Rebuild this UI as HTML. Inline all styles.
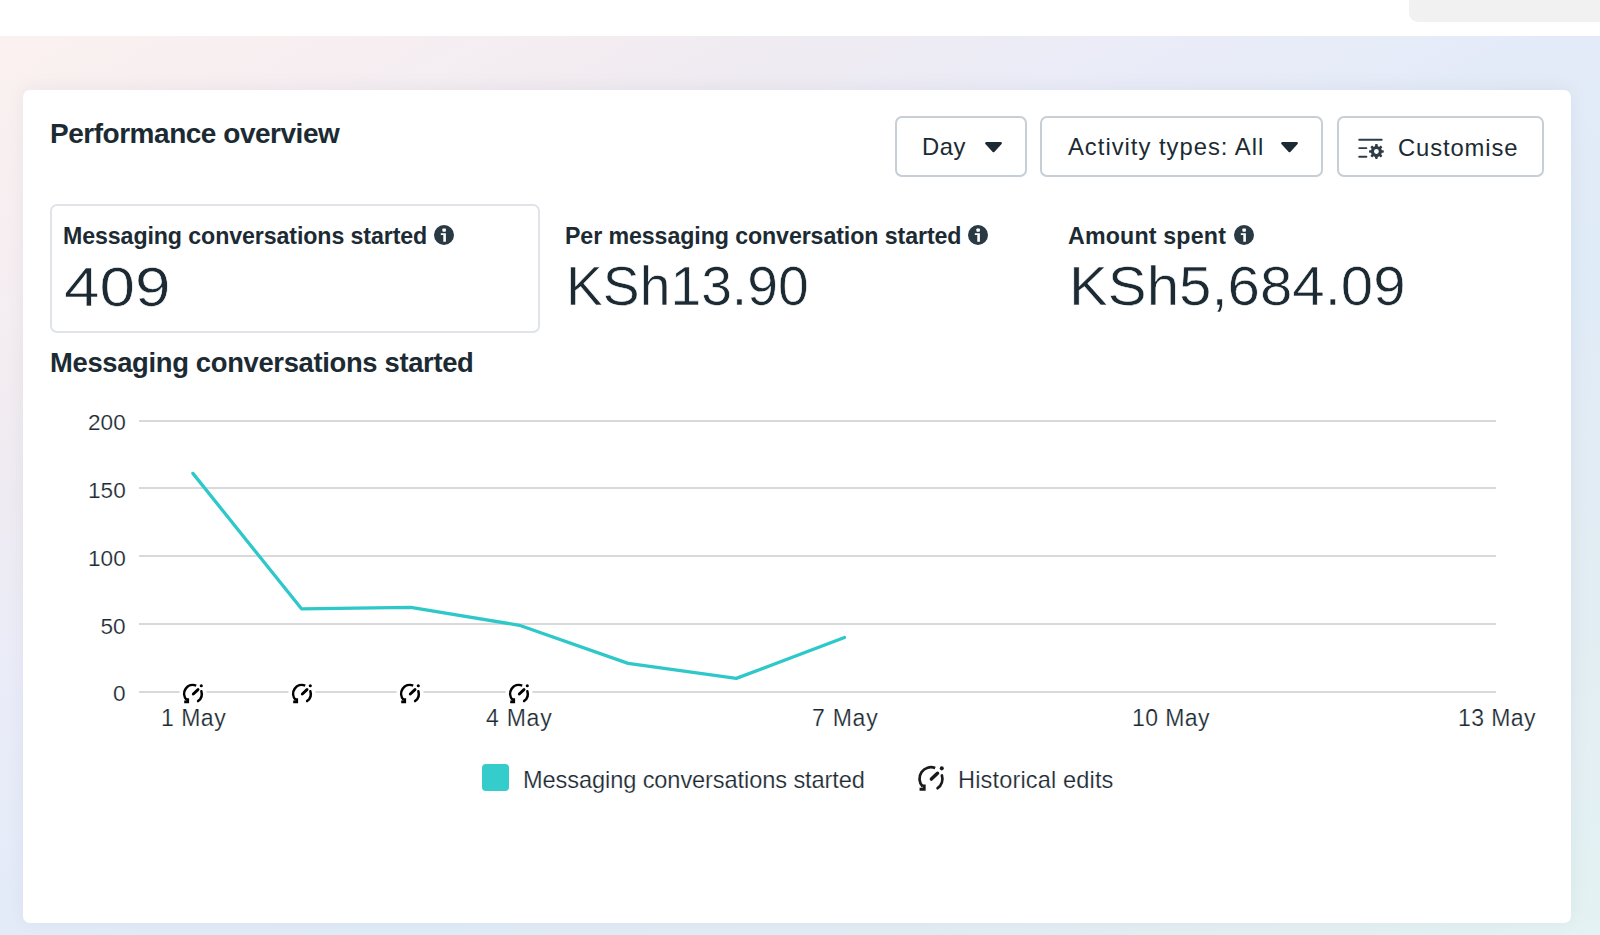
<!DOCTYPE html>
<html>
<head>
<meta charset="utf-8">
<style>
*{margin:0;padding:0;box-sizing:border-box}
html,body{width:1600px;height:935px;overflow:hidden;background:#fff;font-family:"Liberation Sans",sans-serif;color:#1c2b33}
.abs{position:absolute;white-space:nowrap;line-height:1}
#topgray{position:absolute;left:1409px;top:0;width:191px;height:22px;background:#f1f1f1;border-bottom-left-radius:9px}
#bg{position:absolute;left:0;top:36px;width:1600px;height:899px;background:linear-gradient(151deg,#fbf1f0 0%,#f6eef1 12%,#efebf2 26%,#eaecf8 36%,#e3ebf8 50%,#dfebf7 62%,#e2ecf3 78%,#e4f2f3 100%)}
#card{position:absolute;left:23px;top:90px;width:1548px;height:833px;background:#fff;border-radius:7px;box-shadow:0 -2px 20px rgba(20,20,50,0.05)}
.btn{position:absolute;top:116px;height:61px;border:2px solid #c6ced6;border-radius:7px;background:#fff}
.tri{position:absolute}
.info{position:absolute;width:20px;height:20px}
.grid{position:absolute;left:139px;width:1357px;height:2px;background:#d9d9db}
</style>
</head>
<body>
<svg width="0" height="0" style="position:absolute"><defs>
<g id="hist">
 <circle cx="10" cy="9.6" r="13.6" fill="#fff"/>
 <g fill="none" stroke="#000" stroke-width="2.5">
  <path d="M13.22 1.54 A8.8 8.8 0 0 0 3.6 15.8"/>
  <path d="M18.38 7.27 A8.9 8.9 0 0 1 15.08 17.07" stroke-linecap="round"/>
  <path d="M4.7 14.2 V17.9 H1.2" stroke-width="2.80"/>
  <path d="M10.3 10.0 L15.0 5.6" stroke-width="2.9" stroke-linecap="round"/>
 </g>
 <circle cx="18.3" cy="1.8" r="1.55" fill="#000"/>
</g>
<g id="hist2">
 <g fill="none" stroke="#1a1a1a" stroke-width="2.1">
  <path d="M13.22 1.54 A8.8 8.8 0 0 0 3.6 15.8"/>
  <path d="M18.38 7.27 A8.9 8.9 0 0 1 15.08 17.07" stroke-linecap="round"/>
  <path d="M4.7 14.2 V17.9 H1.2" stroke-width="2.40"/>
  <path d="M10.3 10.0 L15.0 5.6" stroke-width="2.7" stroke-linecap="round"/>
 </g>
 <circle cx="18.3" cy="1.8" r="1.55" fill="#1a1a1a"/>
</g>
<g id="info">
 <circle cx="10" cy="10" r="10" fill="#293a44"/>
 <rect x="8.4" y="3.4" width="3.5" height="3.3" rx="0.8" fill="#fff"/>
 <path d="M6.8 8.2H11.9V16.8H9.3V10H6.8Z" fill="#fff"/>
</g>
</defs></svg>
<div id="topgray"></div>
<div id="bg"></div>
<div id="card"></div>

<div class="abs" style="left:50.00px;top:120.30px;font-size:28.0px;font-weight:bold;letter-spacing:-0.474px">Performance overview</div>
<div class="btn" style="left:895px;width:132px"></div>
<div class="abs" style="left:922.00px;top:134.85px;font-size:23.8px;letter-spacing:0.500px">Day</div>
<svg class="tri" style="left:984px;top:141px" width="19" height="13" viewBox="0 0 19 13"><path d="M2.2 2.2H16.8L9.5 10.2Z" fill="#1c2b33" stroke="#1c2b33" stroke-width="2.2" stroke-linejoin="round"/></svg>
<div class="btn" style="left:1040px;width:283px"></div>
<div class="abs" style="left:1068.00px;top:134.85px;font-size:23.8px;letter-spacing:1.000px">Activity types: All</div>
<svg class="tri" style="left:1280px;top:141px" width="19" height="13" viewBox="0 0 19 13"><path d="M2.2 2.2H16.8L9.5 10.2Z" fill="#1c2b33" stroke="#1c2b33" stroke-width="2.2" stroke-linejoin="round"/></svg>
<div class="btn" style="left:1337px;width:207px"></div>
<svg class="abs" style="left:1352px;top:133px" width="40" height="30" viewBox="0 0 40 30">
 <g stroke="#2d3c46" stroke-width="1.9" stroke-linecap="round" fill="none">
  <line x1="7.2" y1="6.7" x2="29.7" y2="6.7"/>
  <line x1="7.2" y1="15.1" x2="14.4" y2="15.1"/>
  <line x1="7.2" y1="23.7" x2="14.4" y2="23.7"/>
 </g>
 <g transform="translate(24.4,18.5)" fill="#2d3c46">
  <circle r="5.5"/>
  <g>
   <rect x="-1.35" y="-7.4" width="2.7" height="14.8" rx="0.8"/>
   <rect x="-1.35" y="-7.4" width="2.7" height="14.8" rx="0.8" transform="rotate(45)"/>
   <rect x="-1.35" y="-7.4" width="2.7" height="14.8" rx="0.8" transform="rotate(90)"/>
   <rect x="-1.35" y="-7.4" width="2.7" height="14.8" rx="0.8" transform="rotate(135)"/>
  </g>
  <circle r="2.4" fill="#fff"/>
 </g>
</svg>
<div class="abs" style="left:1398.00px;top:135.85px;font-size:23.8px;letter-spacing:0.875px">Customise</div>

<div style="position:absolute;left:50px;top:204px;width:490px;height:129px;border:2px solid #e0e3e7;border-radius:7px"></div>
<div class="abs" style="left:63.00px;top:225.36px;font-size:23.2px;font-weight:bold;letter-spacing:-0.100px">Messaging conversations started</div>
<svg class="info" style="left:434px;top:225px" viewBox="0 0 20 20"><use href="#info"/></svg>
<div class="abs" style="left:64.00px;top:260.44px;font-size:55px;-webkit-text-stroke:0.6px #fff;transform:scaleX(1.1610);transform-origin:0 0">409</div>
<div class="abs" style="left:565.00px;top:225.36px;font-size:23.2px;font-weight:bold;letter-spacing:-0.091px">Per messaging conversation started</div>
<svg class="info" style="left:968px;top:225px" viewBox="0 0 20 20"><use href="#info"/></svg>
<div class="abs" style="left:566.00px;top:259.44px;font-size:55px;-webkit-text-stroke:0.6px #fff;transform:scaleX(1.0044);transform-origin:0 0">KSh13.90</div>
<div class="abs" style="left:1068.00px;top:225.36px;font-size:23.2px;font-weight:bold;letter-spacing:0.182px">Amount spent</div>
<svg class="info" style="left:1233.5px;top:225px" viewBox="0 0 20 20"><use href="#info"/></svg>
<div class="abs" style="left:1069.00px;top:259.44px;font-size:55px;-webkit-text-stroke:0.6px #fff;transform:scaleX(1.0583);transform-origin:0 0">KSh5,684.09</div>

<div class="abs" style="left:50.00px;top:348.81px;font-size:27.4px;font-weight:bold;letter-spacing:-0.333px">Messaging conversations started</div>

<div class="grid" style="top:419.5px"></div>
<div class="grid" style="top:487.3px"></div>
<div class="grid" style="top:555px"></div>
<div class="grid" style="top:623px"></div>
<div class="grid" style="top:691px"></div>
<div class="abs" style="left:88.00px;top:411.87px;font-size:22.6px;-webkit-text-stroke:0.2px #fff">200</div>
<div class="abs" style="left:88.00px;top:479.87px;font-size:22.6px;-webkit-text-stroke:0.2px #fff">150</div>
<div class="abs" style="left:88.00px;top:547.87px;font-size:22.6px;-webkit-text-stroke:0.2px #fff">100</div>
<div class="abs" style="left:100.50px;top:615.87px;font-size:22.6px;-webkit-text-stroke:0.2px #fff">50</div>
<div class="abs" style="left:113.00px;top:682.87px;font-size:22.6px;-webkit-text-stroke:0.2px #fff">0</div>

<svg class="abs" style="left:0;top:0" width="1600" height="935">
 <polyline fill="none" stroke="#2fc8c9" stroke-width="3.3" stroke-linejoin="round" stroke-linecap="round" points="192.9,473.4 301.5,608.8 410.8,607.3 519.4,625.3 628.1,663.4 736.3,678.4 844.5,637.5"/>
</svg>
<svg class="abs" style="left:183.2px;top:683.5px;overflow:visible" width="20" height="20"><use href="#hist"/></svg>
<svg class="abs" style="left:291.8px;top:683.5px;overflow:visible" width="20" height="20"><use href="#hist"/></svg>
<svg class="abs" style="left:400.4px;top:683.5px;overflow:visible" width="20" height="20"><use href="#hist"/></svg>
<svg class="abs" style="left:509.1px;top:683.5px;overflow:visible" width="20" height="20"><use href="#hist"/></svg>
<div class="abs" style="left:161.00px;top:706.53px;font-size:23.0px;-webkit-text-stroke:0.2px #fff;letter-spacing:0.500px">1 May</div>
<div class="abs" style="left:486.00px;top:706.53px;font-size:23.0px;-webkit-text-stroke:0.2px #fff;letter-spacing:0.750px">4 May</div>
<div class="abs" style="left:812.00px;top:706.53px;font-size:23.0px;-webkit-text-stroke:0.2px #fff;letter-spacing:0.750px">7 May</div>
<div class="abs" style="left:1132.00px;top:706.53px;font-size:23.0px;-webkit-text-stroke:0.2px #fff;letter-spacing:0.400px">10 May</div>
<div class="abs" style="left:1458.00px;top:706.53px;font-size:23.0px;-webkit-text-stroke:0.2px #fff;letter-spacing:0.400px">13 May</div>

<div style="position:absolute;left:482px;top:764px;width:27px;height:27px;background:#35cccc;border-radius:4px"></div>
<div class="abs" style="left:523.00px;top:769.02px;font-size:23.6px;-webkit-text-stroke:0.2px #fff;letter-spacing:-0.100px">Messaging conversations started</div>
<svg class="abs" style="left:918px;top:766px;overflow:visible" width="26" height="25" viewBox="0 0 20 19.2"><use href="#hist2"/></svg>
<div class="abs" style="left:958.00px;top:769.02px;font-size:23.6px;-webkit-text-stroke:0.2px #fff;letter-spacing:0.133px">Historical edits</div>
</body>
</html>
